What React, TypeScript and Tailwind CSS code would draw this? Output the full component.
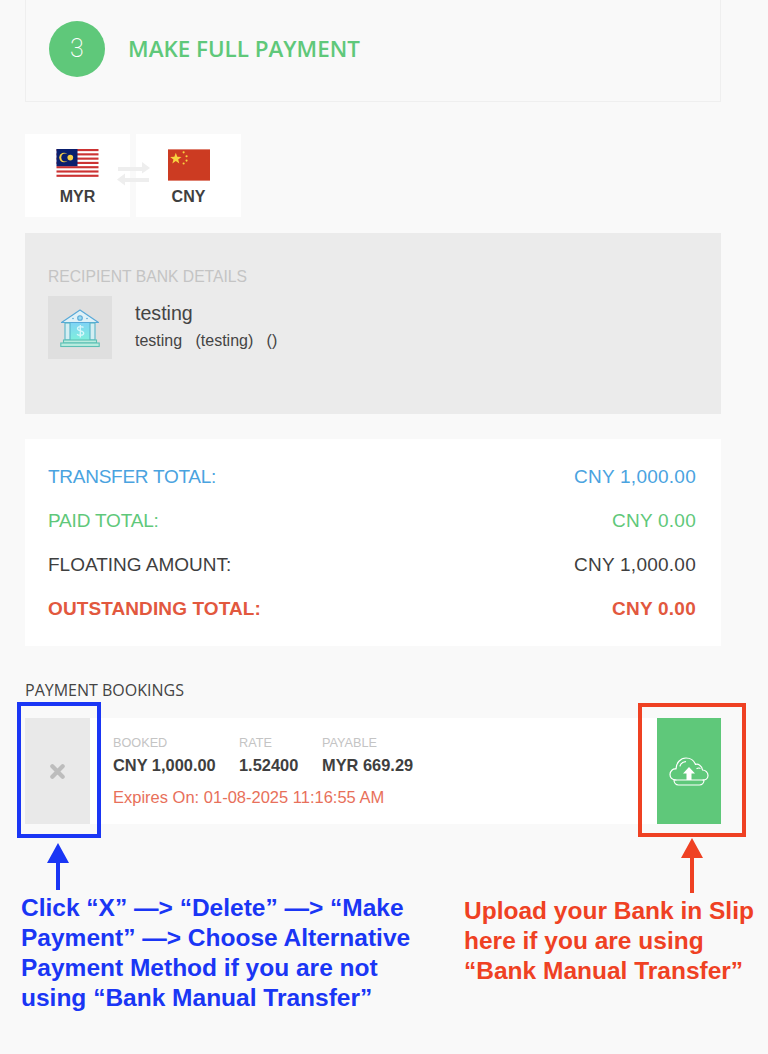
const ARIAL = "font-['Liberation_Sans',Arial,sans-serif]";

function MalaysiaFlag() {
  const stripes = [0, 2, 4, 6, 8, 10, 12, 14];
  return (
    <svg width="43" height="30" viewBox="0 0 28 20" className="block">
      <rect width="28" height="20" fill="#fff" />
      {stripes.map((i) => (
        <rect key={i} y={(i * 20) / 14} width="28" height={20 / 14} fill="#cc3333" />
      ))}
      <rect width="14" height={(20 * 8) / 14} fill="#0a1f6e" />
      <circle cx="5" cy="5.7" r="3.2" fill="#f7cf46" />
      <circle cx="5.9" cy="5.7" r="2.7" fill="#0a1f6e" />
      <circle cx="9.2" cy="5.7" r="1.9" fill="#f7cf46" />
    </svg>
  );
}

function ChinaFlag() {
  return (
    <svg width="42" height="32" viewBox="0 0 43 32" className="block">
      <rect width="43" height="32" fill="#cc3b22" />
      <polygon
        points="8,3.5 9.5,7.6 13.8,7.7 10.4,10.3 11.6,14.4 8,12 4.4,14.4 5.6,10.3 2.2,7.7 6.5,7.6"
        fill="#f8d33f"
      />
      <circle cx="16" cy="3" r="1.1" fill="#f8d33f" />
      <circle cx="19" cy="7" r="1.1" fill="#f8d33f" />
      <circle cx="19" cy="11.5" r="1.1" fill="#f8d33f" />
      <circle cx="16" cy="14.5" r="1.1" fill="#f8d33f" />
    </svg>
  );
}

function BankIcon() {
  return (
    <svg width="40" height="40" viewBox="0 0 40 40" fill="none">
      <defs>
        <linearGradient id="bankFill" x1="0" y1="0" x2="0" y2="1">
          <stop offset="0" stopColor="#7fd4f5" />
          <stop offset="1" stopColor="#7fefdc" />
        </linearGradient>
      </defs>
      <rect x="8" y="15" width="24" height="17" fill="url(#bankFill)" />
      <path d="M1.5 14.5 20 2l18.5 12.5z" fill="#dff1f7" stroke="#58a9d8" strokeWidth="1.2" strokeLinejoin="round" />
      <circle cx="20" cy="10" r="2.3" fill="#9adcf2" stroke="#58a9d8" strokeWidth="1.1" />
      <circle cx="13" cy="10.5" r="0.8" fill="#58a9d8" />
      <circle cx="27" cy="10.5" r="0.8" fill="#58a9d8" />
      <rect x="5" y="15" width="5" height="17" fill="#d4eef2" stroke="#58b4c8" strokeWidth="1.1" />
      <rect x="30" y="15" width="5" height="17" fill="#d4eef2" stroke="#58b4c8" strokeWidth="1.1" />
      <path d="M23.5 19.5c-1-1.2-6-1.5-6 1.1 0 3 6.2 1.6 6.2 4.6 0 2.6-5.2 2.4-6.7 1M20.3 17v12.5" stroke="#d9f7fa" strokeWidth="1.3" />
      <rect x="3.5" y="32" width="33" height="3" fill="#b9ecde" stroke="#5cc0b4" strokeWidth="1.1" />
      <rect x="0.8" y="35" width="38.4" height="3.5" fill="#b9ecde" stroke="#5cc0b4" strokeWidth="1.1" />
    </svg>
  );
}

function UploadCloudIcon() {
  return (
    <svg width="40" height="29" viewBox="0 0 40 29" fill="none" stroke="#fff" strokeWidth="1.2" strokeLinecap="round" strokeLinejoin="round">
      <path d="M7 23C3 23 1 20.5 1 17.5 1 14 4 11.5 7 12 7 6 11.5 1 17 1c4.5 0 8 2.5 9.5 6.5C29 6.5 33 8.5 33.5 13 36.5 13 39 15.5 39 18.5 39 21 37 23 34 23" />
      <path d="M11 9c.8-2.5 3-4 5.5-4.3M28 11.5c1-.6 2-.7 3-.2" />
      <path d="M5 23h30c0 3-2 5-4.5 5h-21C7 28 5 26 5 23z" />
      <path d="M20 10l-6 6.500h3.500V23h5v-6.500H26z" fill="#fff" stroke="none" />
    </svg>
  );
}

function SwapArrows() {
  return (
    <svg width="33" height="24" viewBox="0 0 33 24" fill="#eeeeee">
      <path d="M1 5h24V0l8 6-8 5.5V9H1zM32 16H8v-4.5L0 17.5 8 23.5V20h24z" />
    </svg>
  );
}

function TotalRow({
  label,
  value,
  className,
  labelClassName,
}: {
  label: string;
  value: string;
  className: string;
  labelClassName: string;
}) {
  return (
    <div className={`flex items-center justify-between h-[44px] text-[19px] ${className}`}>
      <span className={labelClassName}>{label}</span>
      <span className="tracking-[0.25px]">{value}</span>
    </div>
  );
}

function Stat({ label, value, className }: { label: string; value: string; className: string }) {
  return (
    <div className={className}>
      <div className="text-[12.7px] leading-[14px] text-[#c4c4c4]">{label}</div>
      <div className="mt-[5px] text-[16.4px] leading-[20px] font-bold text-[#3f3f3f]">{value}</div>
    </div>
  );
}

export default function App() {
  return (
    <div className={`relative h-[1054px] w-[768px] overflow-hidden bg-[#f9f9f9] pl-[25px] ${ARIAL}`}>
      {/* Step header */}
      <div className="flex h-[102px] w-[696px] items-center border-b border-l border-r border-[#efefef] pb-[3px] pl-[23px]">
        <div className="flex h-[56px] w-[56px] items-center justify-center rounded-full bg-[#5fc87a] font-['Roboto',sans-serif] text-[25px] font-extralight text-white">
          3
        </div>
        <h2 className="ml-[23px] font-['Open_Sans',sans-serif] text-[22.4px] font-semibold text-[#5fc87a]">
          MAKE FULL PAYMENT
        </h2>
      </div>

      {/* Currency pair */}
      <div className="relative mt-[32px] flex h-[83px] gap-[6px]">
        <div className="flex w-[105px] flex-col items-center bg-white pt-[15px]">
          <MalaysiaFlag />
          <div className="mt-[9px] text-[16px] font-bold leading-[18px] text-[#3f3f3f]">MYR</div>
        </div>
        <div className="flex w-[105px] flex-col items-center bg-white pt-[15px]">
          <ChinaFlag />
          <div className="mt-[7px] text-[16px] font-bold leading-[18px] text-[#3f3f3f]">CNY</div>
        </div>
        <div className="absolute left-[92px] top-[28px]">
          <SwapArrows />
        </div>
      </div>

      {/* Recipient */}
      <div className="mt-[16px] h-[181px] w-[696px] bg-[#ebebeb] pl-[23px] pt-[35px]">
        <div className="text-[15.7px] leading-[18px] text-[#c4c4c4]">RECIPIENT BANK DETAILS</div>
        <div className="mt-[10px] flex">
          <div className="flex h-[63px] w-[64px] items-center justify-center bg-[#dfdfdf]">
            <BankIcon />
          </div>
          <div className="ml-[23px] text-[#444444]">
            <div className="pt-[6px] text-[19.6px] leading-[22px]">testing</div>
            <div className="mt-[7px] whitespace-pre text-[16px] leading-[20px]">testing   (testing)   ()</div>
          </div>
        </div>
      </div>

      {/* Totals */}
      <div className="mt-[25px] flex h-[207px] w-[696px] flex-col justify-center bg-white pl-[23px] pr-[25px] pt-[2px]">
        <TotalRow label="TRANSFER TOTAL:" value="CNY 1,000.00" className="text-[#4aa3df]" labelClassName="tracking-[-0.27px]" />
        <TotalRow label="PAID TOTAL:" value="CNY 0.00" className="text-[#5fc87a]" labelClassName="tracking-[-0.18px]" />
        <TotalRow label="FLOATING AMOUNT:" value="CNY 1,000.00" className="text-[#3f3f3f]" labelClassName="" />
        <TotalRow label="OUTSTANDING TOTAL:" value="CNY 0.00" className="font-bold text-[#e2583e]" labelClassName="tracking-[0.1px]" />
      </div>

      {/* Bookings */}
      <div className="mt-[34px] font-['Open_Sans',sans-serif] text-[16px] leading-[20px] text-[#444444]">PAYMENT BOOKINGS</div>
      <div className="mt-[18px] flex h-[106px] w-[696px] bg-white">
        <div className="flex h-full w-[65px] items-center justify-center bg-[#e9e9e9] pr-[1px] pt-[1px]">
          <svg width="15" height="15" viewBox="0 0 16 16" stroke="#bdbdbd" strokeWidth="4.5" strokeLinecap="round">
            <path d="M2.5 2.5l11 11M13.5 2.5l-11 11" />
          </svg>
        </div>
        <div className="flex-1 pl-[23px] pt-[18px]">
          <div className="flex">
            <Stat label="BOOKED" value="CNY 1,000.00" className="w-[126px]" />
            <Stat label="RATE" value="1.52400" className="w-[83px]" />
            <Stat label="PAYABLE" value="MYR 669.29" className="" />
          </div>
          <div className="mt-[12px] text-[16.5px] leading-[20px] text-[#e8705a]">Expires On: 01-08-2025 11:16:55 AM</div>
        </div>
        <div className="flex h-full w-[64px] items-center justify-center bg-[#5fc87a]">
          <UploadCloudIcon />
        </div>
      </div>

      {/* Annotations drawn over the page */}
      <div className="absolute left-[17px] top-[702px] h-[136px] w-[84px] border-[4px] border-[#1a36f5]" />
      <div className="absolute left-[638px] top-[703px] h-[134px] w-[108px] border-[4px] border-[#ef4123]" />
      <svg className="absolute left-[47px] top-[842px]" width="22" height="50" viewBox="0 0 22 50" fill="#1a36f5">
        <path d="M11 1 22 21H13V48H9V21H0z" />
      </svg>
      <svg className="absolute left-[681px] top-[837px]" width="22" height="57" viewBox="0 0 22 57" fill="#ef4123">
        <path d="M11 1 22 21H13V56H9V21H0z" />
      </svg>
      <div className="absolute left-[21px] top-[893px] w-[410px] text-[24.5px] font-bold leading-[30px] text-[#1a36f5]">
        <div>Click “X” —&gt; “Delete” —&gt; “Make</div>
        <div>Payment” —&gt; Choose Alternative</div>
        <div>Payment Method if you are not</div>
        <div>using “Bank Manual Transfer”</div>
      </div>
      <div className="absolute left-[464px] top-[896px] w-[304px] text-[24.5px] font-bold leading-[30px] text-[#ef4123]">
        <div>Upload your Bank in Slip</div>
        <div>here if you are using</div>
        <div>“Bank Manual Transfer”</div>
      </div>
    </div>
  );
}
